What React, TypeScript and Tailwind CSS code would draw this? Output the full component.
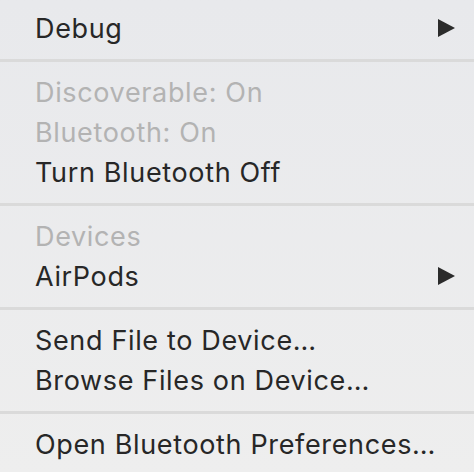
import React from "react";

type Item =
  | { kind: "row"; label: string; disabled?: boolean; submenu?: boolean }
  | { kind: "sep" };

const items: Item[] = [
  { kind: "row", label: "Debug", submenu: true },
  { kind: "sep" },
  { kind: "row", label: "Discoverable: On", disabled: true },
  { kind: "row", label: "Bluetooth: On", disabled: true },
  { kind: "row", label: "Turn Bluetooth Off" },
  { kind: "sep" },
  { kind: "row", label: "Devices", disabled: true },
  { kind: "row", label: "AirPods", submenu: true },
  { kind: "sep" },
  { kind: "row", label: "Send File to Device…" },
  { kind: "row", label: "Browse Files on Device…" },
  { kind: "sep" },
  { kind: "row", label: "Open Bluetooth Preferences…" },
];

const Arrow = () => (
  <svg width="19" height="20" viewBox="0 0 19 20" className="shrink-0">
    <path d="M1 1 L18 10 L1 19 Z" fill="#2b2b2b" />
  </svg>
);

export default function App() {
  return (
    <div
      className="w-[474px] h-[472px] overflow-hidden bg-gradient-to-b from-[#e8e9ec] to-[#eeeeee] py-2 text-[27px] leading-none tracking-[0.65px]"
      style={{ fontFamily: "Inter, 'Noto Sans', sans-serif" }}
    >
      {items.map((item, i) =>
        item.kind === "sep" ? (
          <div key={i} className="h-[24px] flex items-center">
            <div className="w-full h-[3px] bg-[#dadada]" />
          </div>
        ) : (
          <div
            key={i}
            className="h-[40px] flex items-center justify-between pl-[35px] pr-[18px]"
          >
            <span className={item.disabled ? "text-[#b3b3b3]" : "text-[#272727]"}>
              {item.label}
            </span>
            {item.submenu && <Arrow />}
          </div>
        )
      )}
    </div>
  );
}
